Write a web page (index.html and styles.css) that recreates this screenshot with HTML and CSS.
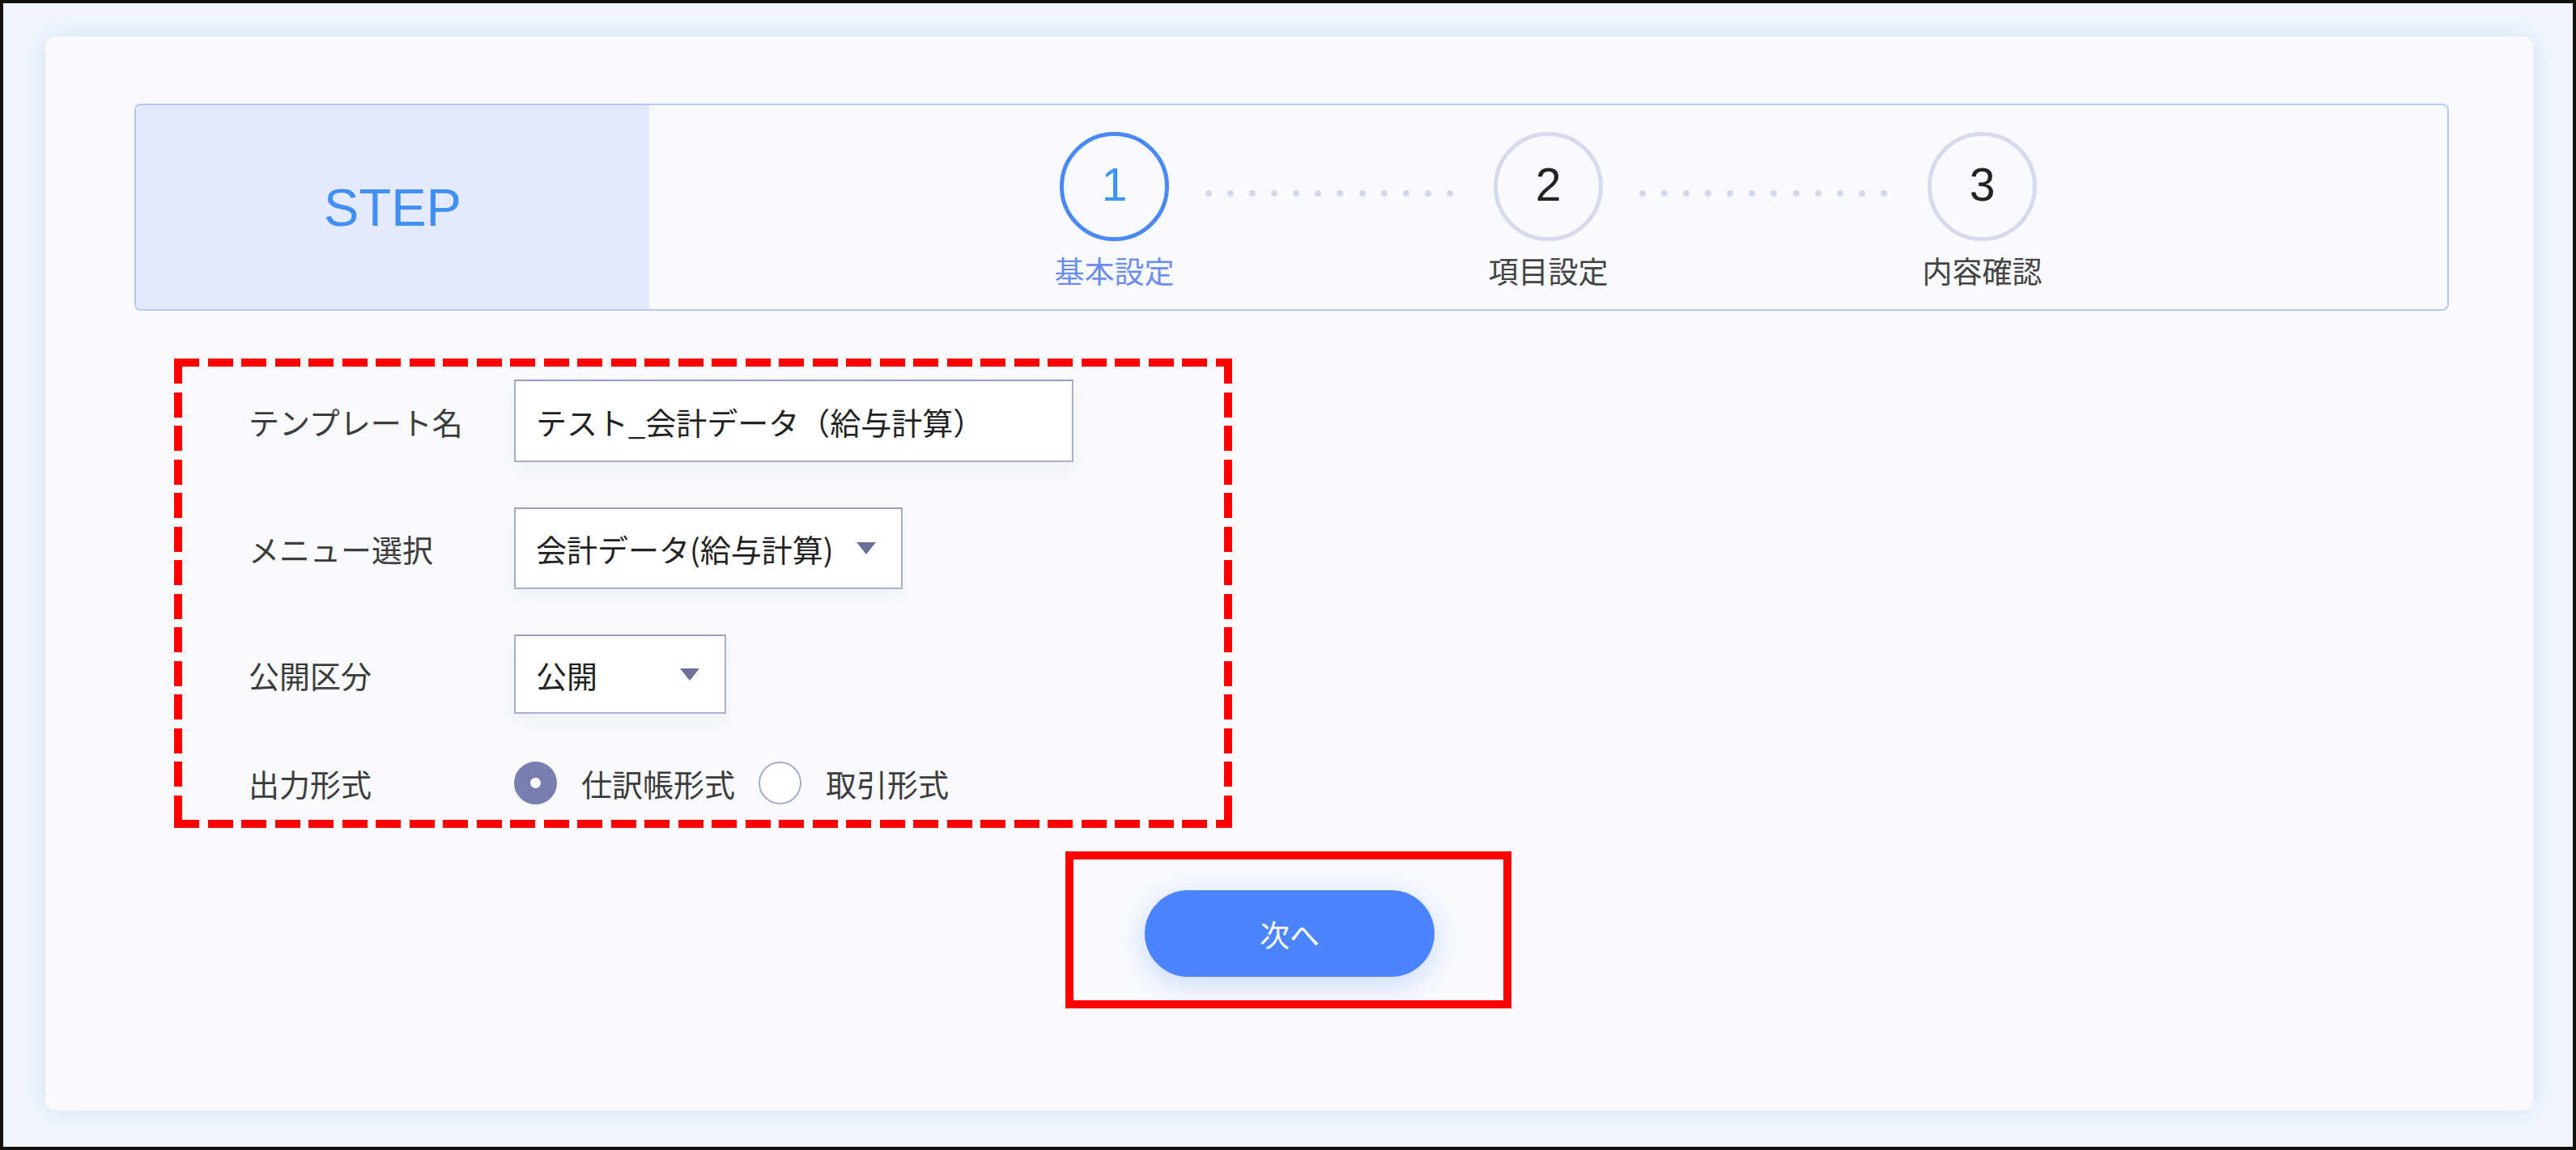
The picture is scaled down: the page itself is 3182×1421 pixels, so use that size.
FILE: index.html
```html
<!DOCTYPE html>
<html lang="ja">
<head>
<meta charset="utf-8">
<title>STEP</title>
<link rel="stylesheet" href="styles.css">
</head>
<body>
<div class="frame">
  <div class="card">
    <div class="stepbar">
      <div class="step-title">STEP</div>
      <div class="steps">
        <div class="step active">
          <div class="step-circle">1</div>
          <div class="step-label">基本設定</div>
        </div>
        <div class="connector"><span></span><span></span><span></span><span></span><span></span><span></span><span></span><span></span><span></span><span></span><span></span><span></span></div>
        <div class="step">
          <div class="step-circle">2</div>
          <div class="step-label">項目設定</div>
        </div>
        <div class="connector"><span></span><span></span><span></span><span></span><span></span><span></span><span></span><span></span><span></span><span></span><span></span><span></span></div>
        <div class="step">
          <div class="step-circle">3</div>
          <div class="step-label">内容確認</div>
        </div>
      </div>
    </div>

    <div class="form">
      <div class="row">
        <div class="label">テンプレート名</div>
        <div class="field input">テスト_会計データ（給与計算）</div>
      </div>
      <div class="row">
        <div class="label">メニュー選択</div>
        <div class="field select-menu"><span>会計データ(給与計算)</span><span class="arrow"></span></div>
      </div>
      <div class="row">
        <div class="label">公開区分</div>
        <div class="field select-pub"><span>公開</span><span class="arrow"></span></div>
      </div>
      <div class="row radio-row">
        <div class="label">出力形式</div>
        <div class="radios">
          <span class="radio checked"></span><span class="radio-text">仕訳帳形式</span>
          <span class="radio"></span><span class="radio-text">取引形式</span>
        </div>
      </div>
    </div>

    <div class="next-box">
      <button class="next" type="button">次へ</button>
    </div>
  </div>
</div>
</body>
</html>
```

FILE: styles.css
```css
* { box-sizing: border-box; }
html, body { margin: 0; padding: 0; }
body {
  font-family: "Noto Sans CJK JP", "Noto Sans", sans-serif;
  color: #333;
}
.frame {
  width: 3182px;
  height: 1421px;
  border: 4px solid #111;
  background: #f1f6fd;
  padding: 41px 49px 45px 52px;
  display: flex;
}
.card {
  flex: 1;
  background: #f8fafd;
  border-radius: 12px;
  box-shadow: 0 0 28px rgba(175, 198, 235, 0.45);
  padding: 83px 104px 0 110px;
  display: flex;
  flex-direction: column;
}
.stepbar {
  height: 256px;
  border: 2px solid #b3c8f6;
  border-radius: 8px;
  display: flex;
  overflow: hidden;
  background: #f8fafd;
}
.step-title {
  width: 634px;
  background: #e4eafb;
  display: flex;
  align-items: center;
  justify-content: center;
  font-family: "Liberation Sans", Arial, sans-serif;
  font-size: 65px;
  color: #3f8ff5;
}
.steps {
  flex: 1;
  display: flex;
  justify-content: center;
  align-items: flex-start;
  padding-top: 33px;
}
.step {
  width: 135px;
  display: flex;
  flex-direction: column;
  align-items: center;
}
.step-circle {
  width: 135px;
  height: 135px;
  border-radius: 50%;
  border: 5px solid #d5daef;
  display: flex;
  align-items: center;
  justify-content: center;
  padding-bottom: 5px;
  font-family: "Liberation Sans", Arial, sans-serif;
  font-size: 57px;
  color: #222;
}
.step.active .step-circle {
  border-color: #4a88f7;
  color: #3d95f3;
}
.step-label {
  margin-top: 14px;
  font-size: 37px;
  line-height: 44px;
  white-space: nowrap;
  color: #444;
}
.step.active .step-label { color: #6d8cf1; }
.connector {
  width: 401px;
  padding: 72px 50px 0 45px;
  display: flex;
  justify-content: space-between;
}
.connector span {
  width: 8px;
  height: 8px;
  border-radius: 50%;
  background: #d3d8ee;
}
.form {
  margin-top: 59px;
  margin-left: 49px;
  width: 1307px;
  height: 580px;
  padding: 26px 0 0 92px;
  display: flex;
  flex-direction: column;
  gap: 56px;
  background:
    repeating-linear-gradient(90deg, #ff0000 0 31px, transparent 31px 41.5px) left top / 100% 10px no-repeat,
    repeating-linear-gradient(90deg, #ff0000 0 31px, transparent 31px 41.5px) left bottom / 100% 10px no-repeat,
    repeating-linear-gradient(180deg, #ff0000 0 31px, transparent 31px 41.5px) left top / 10px 100% no-repeat,
    repeating-linear-gradient(180deg, #ff0000 0 31px, transparent 31px 41.5px) right top / 10px 100% no-repeat;
}
.row {
  display: flex;
  align-items: center;
}
.label {
  width: 328px;
  font-size: 38px;
  color: #3c3c3c;
  white-space: nowrap;
}
.field {
  height: 100px;
  background: #fff;
  border: 2px solid #a8aed1;
  border-top-color: #979fc5;
  display: flex;
  align-items: center;
  padding: 0 31px 0 25px;
  font-size: 38px;
  color: #222;
  white-space: nowrap;
  box-shadow: 0 10px 18px rgba(120, 130, 170, 0.07);
}
.input { width: 691px; height: 102px; }
.select-menu { width: 480px; height: 101px; }
.select-pub { width: 262px; height: 98px; }
.arrow {
  margin-left: auto;
  width: 0;
  height: 0;
  border-left: 12px solid transparent;
  border-right: 12px solid transparent;
  border-top: 15px solid #6b7199;
}
.radio-row { height: 58px; }
.radios {
  display: flex;
  align-items: center;
}
.radio {
  width: 53px;
  height: 53px;
  border-radius: 50%;
  border: 2px solid #a6acd0;
  background: #fff;
  margin-right: 30px;
}
.radio.checked {
  background: #7880b1;
  border-color: #7880b1;
  display: flex;
  align-items: center;
  justify-content: center;
}
.radio.checked::after {
  content: "";
  width: 13px;
  height: 13px;
  border-radius: 50%;
  background: #fff;
}
.radio-text {
  font-size: 38px;
  color: #3c3c3c;
  margin-right: 29px;
}
.next-box {
  align-self: center;
  margin-right: 8px;
  margin-top: 29px;
  border: 10px solid #ff0000;
  padding: 38px 85px 29px 88px;
}
.next {
  display: block;
  width: 358px;
  height: 107px;
  border: none;
  border-radius: 54px;
  background: #4b84fc;
  color: #fff;
  font-family: "Noto Sans CJK JP", "Noto Sans", sans-serif;
  font-size: 37px;
  box-shadow: 0 8px 36px rgba(76, 130, 250, 0.28);
}
```
